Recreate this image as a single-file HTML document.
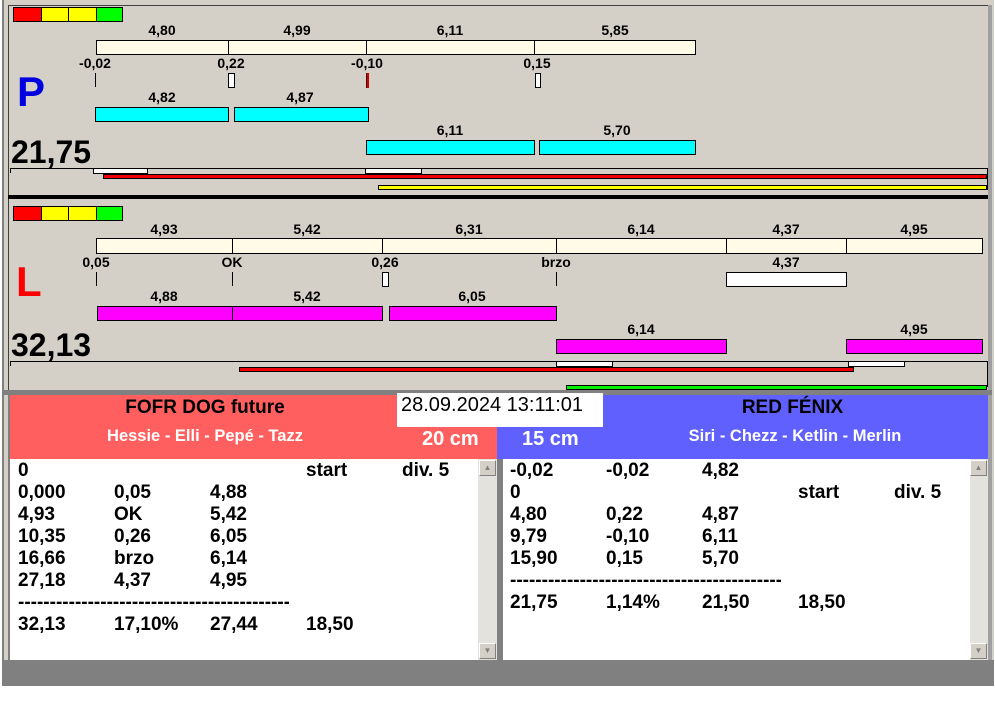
<!DOCTYPE html>
<html><head><meta charset="utf-8"><style>
*{margin:0;padding:0;box-sizing:border-box}
body{width:995px;height:716px;background:#fff;position:relative;overflow:hidden;font-family:"Liberation Sans",Arial,sans-serif}
div{position:absolute}
.b{border:1px solid #000}
.l{font-size:14px;font-weight:bold;width:80px;text-align:center;color:#000;line-height:14px}
.t{font-size:19px;font-weight:bold;line-height:22px;white-space:pre}
</style></head><body>
<div style="left:2px;top:0;width:992px;height:686px;background:#d4d0c8"></div>
<div style="left:2px;top:0;width:2px;height:686px;background:#808080"></div>
<div style="left:8px;top:5px;width:1px;height:385px;background:#404040"></div>
<div style="left:9px;top:5px;width:979px;height:1px;background:#404040"></div>
<div style="left:988px;top:5px;width:4px;height:390px;background:#a0a0a0"></div>

<!-- Panel P -->
<div class="b" style="left:13px;top:7px;width:29px;height:15px;background:#f00"></div>
<div class="b" style="left:41px;top:7px;width:28px;height:15px;background:#ff0"></div>
<div class="b" style="left:68px;top:7px;width:29px;height:15px;background:#ff0"></div>
<div class="b" style="left:96px;top:7px;width:27px;height:15px;background:#0f0"></div>
<div class="l" style="left:122px;top:23px">4,80</div>
<div class="l" style="left:257px;top:23px">4,99</div>
<div class="l" style="left:410px;top:23px">6,11</div>
<div class="l" style="left:575px;top:23px">5,85</div>
<div class="b" style="left:96px;top:40px;width:133px;height:15px;background:#fffbe6"></div>
<div class="b" style="left:228px;top:40px;width:139px;height:15px;background:#fffbe6"></div>
<div class="b" style="left:366px;top:40px;width:169px;height:15px;background:#fffbe6"></div>
<div class="b" style="left:534px;top:40px;width:162px;height:15px;background:#fffbe6"></div>
<div class="l" style="left:55px;top:56px">-0,02</div>
<div class="l" style="left:191px;top:56px">0,22</div>
<div class="l" style="left:327px;top:56px">-0,10</div>
<div class="l" style="left:497px;top:56px">0,15</div>
<div style="left:95px;top:73px;width:1px;height:14px;background:#000"></div>
<div class="b" style="left:228px;top:73px;width:7px;height:15px;background:#fff"></div>
<div style="left:366px;top:73px;width:3px;height:15px;background:#c00;border-left:1px solid #400"></div>
<div class="b" style="left:535px;top:73px;width:6px;height:15px;background:#fff"></div>
<div style="left:17px;top:68px;font-size:42px;font-weight:bold;color:#0000e0">P</div>
<div class="l" style="left:122px;top:90px">4,82</div>
<div class="l" style="left:260px;top:90px">4,87</div>
<div class="b" style="left:95px;top:107px;width:134px;height:15px;background:#0ff"></div>
<div class="b" style="left:234px;top:107px;width:135px;height:15px;background:#0ff"></div>
<div class="l" style="left:410px;top:123px">6,11</div>
<div class="l" style="left:577px;top:123px">5,70</div>
<div class="b" style="left:366px;top:140px;width:169px;height:15px;background:#0ff"></div>
<div class="b" style="left:539px;top:140px;width:157px;height:15px;background:#0ff"></div>
<div style="left:11px;top:134px;font-size:32px;font-weight:bold">21,75</div>
<div style="left:10px;top:168px;width:978px;height:1px;background:#000"></div>
<div style="left:10px;top:168px;width:1px;height:5px;background:#000"></div>
<div style="left:987px;top:168px;width:1px;height:22px;background:#000"></div>
<div class="b" style="left:93px;top:168px;width:55px;height:6px;background:#fff"></div>
<div class="b" style="left:365px;top:168px;width:57px;height:6px;background:#fff"></div>
<div class="b" style="left:103px;top:174px;width:884px;height:5px;background:#e00"></div>
<div class="b" style="left:378px;top:185px;width:609px;height:5px;background:#ff0"></div>
<div style="left:8px;top:195px;width:980px;height:4px;background:#000"></div>

<!-- Panel L -->
<div class="b" style="left:13px;top:206px;width:29px;height:15px;background:#f00"></div>
<div class="b" style="left:41px;top:206px;width:28px;height:15px;background:#ff0"></div>
<div class="b" style="left:68px;top:206px;width:29px;height:15px;background:#ff0"></div>
<div class="b" style="left:96px;top:206px;width:27px;height:15px;background:#0f0"></div>
<div class="l" style="left:124px;top:222px">4,93</div>
<div class="l" style="left:267px;top:222px">5,42</div>
<div class="l" style="left:429px;top:222px">6,31</div>
<div class="l" style="left:601px;top:222px">6,14</div>
<div class="l" style="left:746px;top:222px">4,37</div>
<div class="l" style="left:874px;top:222px">4,95</div>
<div class="b" style="left:96px;top:238px;width:137px;height:16px;background:#fffbe6"></div>
<div class="b" style="left:232px;top:238px;width:151px;height:16px;background:#fffbe6"></div>
<div class="b" style="left:382px;top:238px;width:175px;height:16px;background:#fffbe6"></div>
<div class="b" style="left:556px;top:238px;width:171px;height:16px;background:#fffbe6"></div>
<div class="b" style="left:726px;top:238px;width:121px;height:16px;background:#fffbe6"></div>
<div class="b" style="left:846px;top:238px;width:137px;height:16px;background:#fffbe6"></div>
<div class="l" style="left:56px;top:255px">0,05</div>
<div class="l" style="left:192px;top:255px">OK</div>
<div class="l" style="left:345px;top:255px">0,26</div>
<div class="l" style="left:516px;top:255px">brzo</div>
<div class="l" style="left:746px;top:255px">4,37</div>
<div style="left:96px;top:272px;width:1px;height:14px;background:#000"></div>
<div style="left:232px;top:272px;width:1px;height:14px;background:#000"></div>
<div class="b" style="left:382px;top:272px;width:7px;height:15px;background:#fff"></div>
<div style="left:556px;top:272px;width:1px;height:14px;background:#000"></div>
<div class="b" style="left:726px;top:272px;width:121px;height:15px;background:#fff"></div>
<div style="left:16px;top:258px;font-size:42px;font-weight:bold;color:#f00">L</div>
<div class="l" style="left:124px;top:289px">4,88</div>
<div class="l" style="left:267px;top:289px">5,42</div>
<div class="l" style="left:432px;top:289px">6,05</div>
<div class="b" style="left:97px;top:306px;width:136px;height:15px;background:#f0f"></div>
<div class="b" style="left:232px;top:306px;width:151px;height:15px;background:#f0f"></div>
<div class="b" style="left:389px;top:306px;width:168px;height:15px;background:#f0f"></div>
<div class="l" style="left:601px;top:322px">6,14</div>
<div class="l" style="left:874px;top:322px">4,95</div>
<div class="b" style="left:556px;top:339px;width:171px;height:15px;background:#f0f"></div>
<div class="b" style="left:846px;top:339px;width:137px;height:15px;background:#f0f"></div>
<div style="left:11px;top:327px;font-size:32px;font-weight:bold">32,13</div>
<div style="left:10px;top:361px;width:978px;height:1px;background:#000"></div>
<div style="left:10px;top:361px;width:1px;height:5px;background:#000"></div>
<div style="left:987px;top:361px;width:1px;height:26px;background:#000"></div>
<div class="b" style="left:556px;top:361px;width:57px;height:6px;background:#fff"></div>
<div class="b" style="left:848px;top:361px;width:57px;height:6px;background:#fff"></div>
<div class="b" style="left:239px;top:367px;width:615px;height:5px;background:#e00"></div>
<div class="b" style="left:566px;top:385px;width:421px;height:5px;background:#0e0"></div>

<!-- bottom area -->
<div style="left:4px;top:390px;width:988px;height:5px;background:#808080"></div>
<div style="left:4px;top:395px;width:6px;height:291px;background:#d4d0c8"></div>
<div style="left:8px;top:395px;width:2px;height:265px;background:#808080"></div>
<div style="left:10px;top:395px;width:487px;height:64px;background:#ff5f5f"></div>
<div style="left:497px;top:395px;width:491px;height:64px;background:#6060ff"></div>
<div style="left:10px;top:396px;width:390px;text-align:center;font-size:19px;font-weight:bold;line-height:24px">FOFR DOG future</div>
<div style="left:5px;top:427px;width:400px;text-align:center;font-size:16.5px;font-weight:bold;color:#fff;line-height:18px">Hessie - Elli - Pepé - Tazz</div>
<div style="left:422px;top:428px;font-size:20px;font-weight:bold;color:#fff;line-height:22px">20 cm</div>
<div style="left:522px;top:428px;font-size:20px;font-weight:bold;color:#fff;line-height:22px">15 cm</div>
<div style="left:600px;top:396px;width:385px;text-align:center;font-size:19px;font-weight:bold;line-height:24px">RED FÉNIX</div>
<div style="left:595px;top:427px;width:400px;text-align:center;font-size:16.5px;font-weight:bold;color:#fff;line-height:18px">Siri - Chezz - Ketlin - Merlin</div>
<div style="left:397px;top:393px;width:206px;height:34px;background:#fff;font-size:20px;line-height:24px;padding-left:4px;white-space:nowrap">28.09.2024 13:11:01</div>

<div style="left:10px;top:459px;width:468px;height:201px;background:#fff"></div>
<div style="left:478px;top:459px;width:19px;height:201px;background:#e4e2dc"></div>
<div style="left:479px;top:460px;width:17px;height:16px;background:#d4d0c8;border:1px solid;border-color:#fff #808080 #808080 #fff;font-size:8px;text-align:center;line-height:14px;color:#808080">▲</div>
<div style="left:479px;top:643px;width:17px;height:16px;background:#d4d0c8;border:1px solid;border-color:#fff #808080 #808080 #fff;font-size:8px;text-align:center;line-height:14px;color:#808080">▼</div>
<div style="left:497px;top:459px;width:6px;height:201px;background:#808080"></div>
<div style="left:503px;top:459px;width:467px;height:201px;background:#fff"></div>
<div style="left:970px;top:459px;width:18px;height:201px;background:#e4e2dc"></div>
<div style="left:970px;top:460px;width:17px;height:16px;background:#d4d0c8;border:1px solid;border-color:#fff #808080 #808080 #fff;font-size:8px;text-align:center;line-height:14px;color:#808080">▲</div>
<div style="left:970px;top:643px;width:17px;height:16px;background:#d4d0c8;border:1px solid;border-color:#fff #808080 #808080 #fff;font-size:8px;text-align:center;line-height:14px;color:#808080">▼</div>
<div style="left:988px;top:395px;width:4px;height:265px;background:#a0a0a0"></div>
<div style="left:2px;top:660px;width:992px;height:26px;background:#808080"></div>

<div class="t" style="left:18px;top:460px">0</div>
<div class="t" style="left:306px;top:460px">start</div>
<div class="t" style="left:402px;top:460px">div. 5</div>
<div class="t" style="left:18px;top:482px">0,000</div><div class="t" style="left:114px;top:482px">0,05</div><div class="t" style="left:210px;top:482px">4,88</div>
<div class="t" style="left:18px;top:504px">4,93</div><div class="t" style="left:114px;top:504px">OK</div><div class="t" style="left:210px;top:504px">5,42</div>
<div class="t" style="left:18px;top:526px">10,35</div><div class="t" style="left:114px;top:526px">0,26</div><div class="t" style="left:210px;top:526px">6,05</div>
<div class="t" style="left:18px;top:548px">16,66</div><div class="t" style="left:114px;top:548px">brzo</div><div class="t" style="left:210px;top:548px">6,14</div>
<div class="t" style="left:18px;top:570px">27,18</div><div class="t" style="left:114px;top:570px">4,37</div><div class="t" style="left:210px;top:570px">4,95</div>
<div class="t" style="left:18px;top:592px;overflow:hidden;width:271px">------------------------------------------------</div>
<div class="t" style="left:18px;top:614px">32,13</div><div class="t" style="left:114px;top:614px">17,10%</div><div class="t" style="left:210px;top:614px">27,44</div><div class="t" style="left:306px;top:614px">18,50</div>

<div class="t" style="left:510px;top:460px">-0,02</div><div class="t" style="left:606px;top:460px">-0,02</div><div class="t" style="left:702px;top:460px">4,82</div>
<div class="t" style="left:510px;top:482px">0</div><div class="t" style="left:798px;top:482px">start</div><div class="t" style="left:894px;top:482px">div. 5</div>
<div class="t" style="left:510px;top:504px">4,80</div><div class="t" style="left:606px;top:504px">0,22</div><div class="t" style="left:702px;top:504px">4,87</div>
<div class="t" style="left:510px;top:526px">9,79</div><div class="t" style="left:606px;top:526px">-0,10</div><div class="t" style="left:702px;top:526px">6,11</div>
<div class="t" style="left:510px;top:548px">15,90</div><div class="t" style="left:606px;top:548px">0,15</div><div class="t" style="left:702px;top:548px">5,70</div>
<div class="t" style="left:510px;top:570px;overflow:hidden;width:271px">------------------------------------------------</div>
<div class="t" style="left:510px;top:592px">21,75</div><div class="t" style="left:606px;top:592px">1,14%</div><div class="t" style="left:702px;top:592px">21,50</div><div class="t" style="left:798px;top:592px">18,50</div>
</body></html>
